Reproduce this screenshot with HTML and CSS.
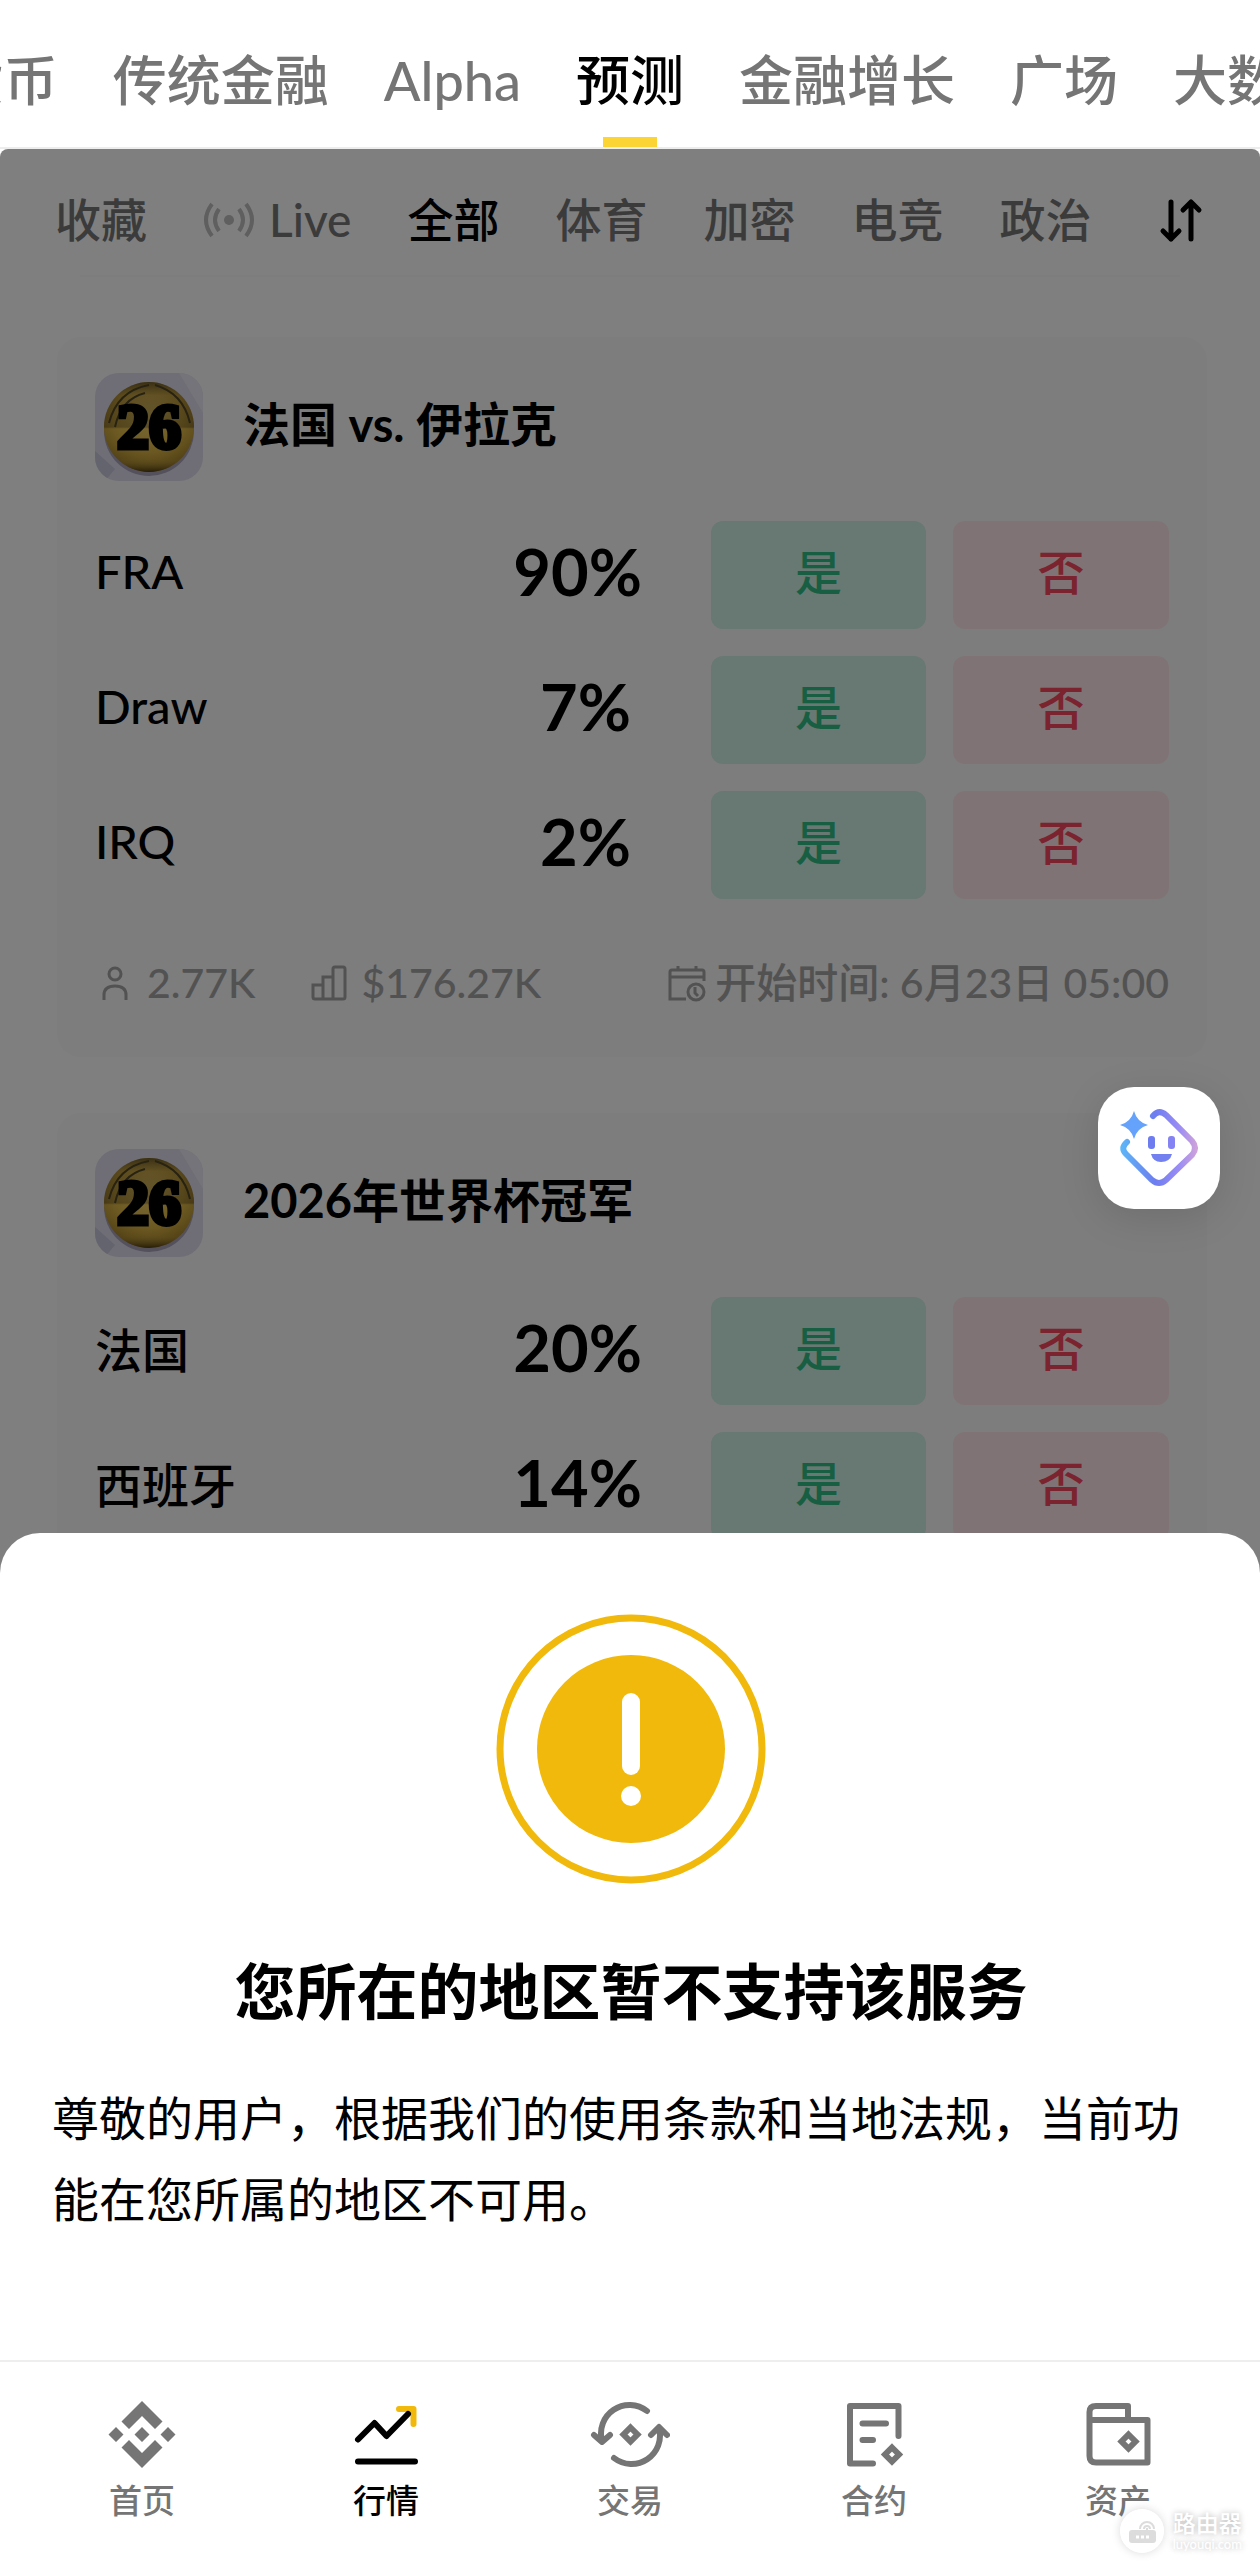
FILE: index.html
```html
<!DOCTYPE html>
<html lang="zh-CN">
<head>
    <meta charset="UTF-8">
    <meta name="viewport" content="width=device-width, initial-scale=1.0">
    <title>预测</title>
    <link rel="stylesheet" href="styles.css">
</head>
<body>

<!-- Shared icons -->
<svg class="sprite" aria-hidden="true">
    <defs>
        <radialGradient id="gold" cx="50%" cy="40%" r="62%">
            <stop offset="0" stop-color="#f2d272"/>
            <stop offset="0.6" stop-color="#cfa83f"/>
            <stop offset="1" stop-color="#8a6a1e"/>
        </radialGradient>
        <linearGradient id="shade" x1="0" y1="0" x2="0" y2="1">
            <stop offset="0" stop-color="#4a4022" stop-opacity="0.7"/>
            <stop offset="0.15" stop-color="#6b5a2a" stop-opacity="0.2"/>
            <stop offset="0.5" stop-color="#6b5a2a" stop-opacity="0.4"/>
            <stop offset="0.52" stop-color="#f4cf55" stop-opacity="0.4"/>
            <stop offset="0.85" stop-color="#f4cf55" stop-opacity="0.2"/>
            <stop offset="1" stop-color="#3a2c08" stop-opacity="0.8"/>
        </linearGradient>
    </defs>
    <symbol id="ball" viewBox="0 0 108 108">
        <rect width="108" height="108" fill="#dedbea"/>
        <path d="M0 78 L20 96 L10 108 H0 Z" fill="#c6c8da"/>
        <path d="M84 0 H108 V40 Z" fill="#ebe8f4"/>
        <ellipse cx="54" cy="58" rx="45" ry="45" fill="#a9a2b8"/>
        <circle cx="54" cy="54" r="45" fill="url(#gold)"/>
        <circle cx="54" cy="54" r="45" fill="url(#shade)"/>
        <path d="M14 50 Q22 18 54 12 M20 54 Q26 26 50 20 M60 12 Q88 20 95 50" fill="none" stroke="#4e4424" stroke-width="2"/>
    </symbol>
    <symbol id="person" viewBox="0 0 40 40">
        <g fill="none" stroke="currentColor" stroke-width="3">
            <circle cx="20" cy="11" r="6"/>
            <path d="M9 37 V32 Q9 23 20 23 Q31 23 31 32 V37"/>
        </g>
    </symbol>
    <symbol id="chart" viewBox="0 0 40 40">
        <path d="M4 22 H14 V36 H6 Q4 36 4 34 Z M14 14 H24 V36 H14 Z M24 6 Q24 4 26 4 H34 Q36 4 36 6 V34 Q36 36 34 36 H24 Z" fill="none" stroke="currentColor" stroke-width="3"/>
    </symbol>
    <symbol id="calendar" viewBox="0 0 40 40">
        <g fill="none" stroke="currentColor" stroke-width="3">
            <path d="M37 18 V9 Q37 7 35 7 H5 Q3 7 3 9 V36 H19 M3 14 H37 M11 3 V8 M29 3 V8"/>
            <circle cx="29" cy="29" r="8"/>
            <path d="M28 24 V30 L31 33"/>
        </g>
    </symbol>
</svg>

<header class="top-tabs">
    <nav class="tabs-before">
        <a href="#">货币</a>
        <a href="#">传统金融</a>
        <a href="#">Alpha</a>
    </nav>
    <a href="#" class="tab-active">预测</a>
    <nav class="tabs-after">
        <a href="#">金融增长</a>
        <a href="#">广场</a>
        <a href="#">大数</a>
    </nav>
</header>

<main class="stage">
    <div class="feed">
        <nav class="sub-tabs">
            <a href="#">收藏</a>
            <a href="#" class="live">
                <svg class="live-icon" viewBox="0 0 52 40" aria-hidden="true">
                    <circle cx="26" cy="20" r="5" fill="currentColor"/>
                    <path d="M16 9 Q8 20 16 31 M36 9 Q44 20 36 31 M9 4 Q-3 20 9 36 M43 4 Q55 20 43 36" fill="none" stroke="currentColor" stroke-width="4"/>
                </svg>
                Live
            </a>
            <a href="#" class="active">全部</a>
            <a href="#">体育</a>
            <a href="#">加密</a>
            <a href="#">电竞</a>
            <a href="#">政治</a>
            <button class="sort" aria-label="排序">
                <svg viewBox="0 0 48 48" fill="none" stroke="currentColor" stroke-width="5" stroke-linecap="round" stroke-linejoin="round">
                    <path d="M14 6 V43 M6 35 L14 43 L22 35 M34 43 V6 M26 14 L34 6 L42 14"/>
                </svg>
            </button>
        </nav>
        <div class="divider"></div>

        <section class="card">
            <div class="card-head">
                <div class="thumb">
                    <svg aria-hidden="true"><use href="#ball"/></svg>
                    <span>26</span>
                </div>
                <h2>法国 vs. 伊拉克</h2>
            </div>
            <ul class="outcomes">
                <li>
                    <span class="name">FRA</span>
                    <span class="odds">90%</span>
                    <button class="yes">是</button>
                    <button class="no">否</button>
                </li>
                <li>
                    <span class="name">Draw</span>
                    <span class="odds odds-short">7%</span>
                    <button class="yes">是</button>
                    <button class="no">否</button>
                </li>
                <li>
                    <span class="name">IRQ</span>
                    <span class="odds odds-short">2%</span>
                    <button class="yes">是</button>
                    <button class="no">否</button>
                </li>
            </ul>
            <div class="meta">
                <span class="meta-item"><svg class="meta-icon"><use href="#person"/></svg>2.77K</span>
                <span class="meta-item"><svg class="meta-icon"><use href="#chart"/></svg>$176.27K</span>
                <span class="meta-item start"><svg class="meta-icon"><use href="#calendar"/></svg>开始时间: 6月23日 05:00</span>
            </div>
        </section>

        <section class="card">
            <div class="card-head">
                <div class="thumb">
                    <svg aria-hidden="true"><use href="#ball"/></svg>
                    <span>26</span>
                </div>
                <h2>2026年世界杯冠军</h2>
            </div>
            <ul class="outcomes">
                <li>
                    <span class="name">法国</span>
                    <span class="odds">20%</span>
                    <button class="yes">是</button>
                    <button class="no">否</button>
                </li>
                <li>
                    <span class="name">西班牙</span>
                    <span class="odds">14%</span>
                    <button class="yes">是</button>
                    <button class="no">否</button>
                </li>
            </ul>
        </section>
    </div>

    <div class="overlay">
        <section class="sheet" role="dialog" aria-labelledby="sheet-title">
            <svg class="warning" viewBox="0 0 270 270" aria-hidden="true">
                <circle cx="135" cy="135" r="131" fill="none" stroke="#f0b90b" stroke-width="7"/>
                <circle cx="135" cy="135" r="94" fill="#f0b90b"/>
                <rect x="126" y="79" width="18" height="82" rx="9" fill="#fff"/>
                <circle cx="135" cy="182" r="10" fill="#fff"/>
            </svg>
            <h1 id="sheet-title">您所在的地区暂不支持该服务</h1>
            <p>尊敬的用户，根据我们的使用条款和当地法规，当前功能在您所属的地区不可用。</p>
        </section>
    </div>

    <button class="assistant" aria-label="AI 助手">
        <svg viewBox="0 0 122 122">
            <defs>
                <linearGradient id="ai" gradientUnits="userSpaceOnUse" x1="22" y1="60" x2="100" y2="60">
                    <stop offset="0" stop-color="#5cb8f8"/>
                    <stop offset="0.45" stop-color="#6d7df0"/>
                    <stop offset="0.75" stop-color="#9a8cf5"/>
                    <stop offset="1" stop-color="#d3a4d8"/>
                </linearGradient>
            </defs>
            <path d="M55 29 Q61 22 68 28 L94 54 Q100 61 94 68 L68 93 Q61 99 54 93 L28 67 Q22 61 29 55" fill="none" stroke="url(#ai)" stroke-width="6" stroke-linecap="round"/>
            <path d="M36 24 Q39 35 50 38 Q39 41 36 52 Q33 41 22 38 Q33 35 36 24 Z" fill="#64a2fb"/>
            <rect x="50" y="49" width="7" height="13" rx="3" fill="#6d7df0"/>
            <rect x="70" y="49" width="7" height="13" rx="3" fill="#8583f3"/>
            <path d="M53 67 H74 Q72 75 63 75 Q55 75 53 67 Z" fill="#7280f0"/>
        </svg>
    </button>
</main>

<nav class="bottom-nav">
    <a href="#">
        <svg viewBox="0 0 80 80" fill="currentColor">
            <path d="M40 7 L60.5 27.5 L53 35 L40 22 L27 35 L19.5 27.5 Z"/>
            <path d="M40 74 L60.5 53.5 L53 46 L40 59 L27 46 L19.5 53.5 Z"/>
            <path d="M40 33 L47.5 40.5 L40 48 L32.5 40.5 Z M14 33 L21.5 40.5 L14 48 L6.5 40.5 Z M66 33 L73.5 40.5 L66 48 L58.5 40.5 Z"/>
        </svg>
        首页
    </a>
    <a href="#" class="active">
        <svg viewBox="0 0 80 80" fill="none" stroke-width="6" stroke-linecap="round" stroke-linejoin="round">
            <path d="M53 15 H67.5 V30" stroke="#f0b90b"/>
            <path d="M58 14 H68 V24 Z" fill="#f0b90b"/>
            <path d="M12 45.5 L28.5 29 L40.5 42 L62 20 M12 67.5 H69" stroke="currentColor"/>
        </svg>
        行情
    </a>
    <a href="#">
        <svg viewBox="0 0 80 80" fill="none" stroke="currentColor" stroke-width="6" stroke-linecap="round" stroke-linejoin="round">
            <path d="M57 17 A28.5 28.5 0 0 0 12 47 M4 41 L12 48 L20 41"/>
            <path d="M24 64 A28.5 28.5 0 0 0 69 34 M61 41 L69 33 L77 41"/>
            <path d="M40.5 33.5 L47.5 40.5 L40.5 47.5 L33.5 40.5 Z" stroke-linejoin="miter"/>
        </svg>
        交易
    </a>
    <a href="#">
        <svg viewBox="0 0 80 80" fill="none" stroke="currentColor" stroke-width="6" stroke-linecap="round" stroke-linejoin="round">
            <path d="M64.5 42 V12 H16 V69.5 H39 M28.5 29.5 H52 M28.5 46 H39"/>
            <path d="M58 53.5 L65 60.5 L58 67.5 L51 60.5 Z" stroke-linejoin="miter"/>
        </svg>
        合约
    </a>
    <a href="#">
        <svg viewBox="0 0 80 80" fill="none" stroke="currentColor" stroke-width="6" stroke-linejoin="round">
            <path d="M11.5 26 V18 Q11.5 12 18 12 H50 V26 M11.5 26 H69.5 V68.5 H18 Q11.5 68.5 11.5 62 Z"/>
            <path d="M50.5 40.5 L57.5 47.5 L50.5 54.5 L43.5 47.5 Z" stroke-linejoin="miter"/>
        </svg>
        资产
    </a>
</nav>

<div class="watermark">
    <svg viewBox="0 0 44 44" aria-hidden="true">
        <circle cx="22" cy="22" r="22" fill="#fff"/>
        <rect x="9" y="21" width="27" height="13" rx="3" fill="#dcdcdc"/>
        <path d="M20 20 A7 7 0 0 1 34 20 M24 20 A3 3 0 0 1 30 20 M27 19 V22" fill="none" stroke="#dcdcdc" stroke-width="2"/>
        <path d="M16 28 H19 M21 28 H24 M26 28 H29" stroke="#fff" stroke-width="3"/>
    </svg>
    <div class="watermark-text">
        <span class="watermark-name">路由器</span>
        <span class="watermark-url">luyouqi.com</span>
    </div>
</div>

</body>
</html>
```
FILE: styles.css
```css
* {
    box-sizing: border-box;
}
body {
    display: flex;
    flex-direction: column;
    height: 100vh;
    margin: 0;
    overflow: hidden;
    position: relative;
    background-color: #fff;
    color: #000;
    font-family: Lato, "Noto Sans CJK SC", sans-serif;
    font-size: 47px;
    font-weight: 500;
}
a {
    color: inherit;
    text-decoration: none;
    white-space: nowrap;
}
button {
    border: none;
    padding: 0;
    background: none;
    color: inherit;
    font: inherit;
    cursor: pointer;
}
svg {
    display: block;
    flex: none;
}
.sprite {
    position: absolute;
    width: 0;
    height: 0;
}

/* Top tabs, the active one stays centred */
.top-tabs {
    display: grid;
    grid-template-columns: minmax(0, 1fr) auto minmax(0, 1fr);
    gap: 55px;
    flex: none;
    border-bottom: 2px solid #ededed;
    overflow: hidden;
    color: #757575;
    font-size: 54px;
    line-height: 66px;
}
.top-tabs a {
    padding: 48px 0 33px;
}
.tabs-before,
.tabs-after {
    display: flex;
    gap: 55px;
}
.tabs-before {
    justify-content: flex-end;
}
.top-tabs .tab-active {
    position: relative;
    color: #000;
}
.tab-active::after {
    content: "";
    position: absolute;
    left: 25%;
    bottom: 0;
    width: 50%;
    height: 10px;
    background-color: #fcd535;
}

/* Feed */
.stage {
    position: relative;
    flex: 1;
    min-height: 0;
    overflow: hidden;
}
.sub-tabs {
    display: flex;
    align-items: center;
    gap: 56px;
    padding: 43px 55px 27px;
    color: #767676;
    font-size: 46px;
    line-height: 56px;
}
.sub-tabs .active {
    color: #000;
}
.live {
    display: flex;
    align-items: center;
    gap: 14px;
}
.live-icon {
    width: 52px;
    height: 40px;
    color: #bebebe;
}
.sort {
    width: 48px;
    height: 48px;
    margin-left: auto;
    color: #000;
}
.divider {
    height: 2px;
    margin: 0 80px;
    background-color: #fafafa;
}
.card {
    margin: 60px 53px 56px 57px;
    padding: 36px 38px 47px;
    border-radius: 24px;
    background-color: #fafafa;
}
.card + .card {
    margin-top: 0;
}
.card-head {
    display: flex;
    align-items: center;
    gap: 40px;
    margin-bottom: 40px;
}
.thumb {
    position: relative;
    width: 108px;
    height: 108px;
    border-radius: 24px;
    overflow: hidden;
}
.thumb svg {
    width: 100%;
    height: 100%;
}
.thumb span {
    position: absolute;
    inset: 0;
    font-family: "Liberation Serif", serif;
    font-size: 64px;
    font-weight: 700;
    line-height: 108px;
    text-align: center;
    -webkit-text-stroke: 5px #000;
}
.card h2 {
    margin: 0;
    padding-bottom: 12px;
    font-size: 47px;
    font-weight: 700;
}
.outcomes {
    display: grid;
    gap: 27px;
    margin: 0;
    padding: 0;
    list-style: none;
}
.outcomes li {
    display: grid;
    grid-template-columns: 1fr auto 215px 216px;
    column-gap: 27px;
    align-items: center;
}
.name,
.odds {
    padding-bottom: 8px;
}
.odds {
    margin-right: 42px;
    font-size: 65px;
    font-weight: 700;
    line-height: 78px;
}
.odds-short {
    margin-right: 53px;
}
.yes,
.no {
    height: 108px;
    padding-bottom: 12px;
    border-radius: 12px;
}
.yes {
    background-color: #d0f0e4;
    color: #2ebd85;
}
.no {
    background-color: #fee6ea;
    color: #f6465d;
}
.meta {
    display: flex;
    gap: 54px;
    margin-top: 57px;
    color: #a4a4a4;
    font-size: 41px;
    line-height: 54px;
}
.meta-item {
    display: flex;
    align-items: center;
    gap: 12px;
    white-space: nowrap;
}
.meta-icon {
    width: 40px;
    height: 40px;
}
.start {
    gap: 8px;
    margin-left: auto;
}

/* Dimmed layer with the bottom sheet */
.overlay {
    position: absolute;
    inset: 0;
    display: flex;
    flex-direction: column;
    justify-content: flex-end;
    border-radius: 8px 8px 0 0;
    background-color: rgba(0, 0, 0, 0.5);
}
.sheet {
    padding: 81px 50px 120px 52px;
    border-radius: 40px 40px 0 0;
    background-color: #fff;
}
.warning {
    width: 270px;
    height: 270px;
    margin: 0 auto;
}
.sheet h1 {
    margin: 66px 0 44px;
    font-size: 61px;
    font-weight: 600;
    line-height: 84px;
    text-align: center;
}
.sheet p {
    margin: 0;
    font-weight: 400;
    line-height: 81px;
}
.assistant {
    position: absolute;
    top: 938px;
    right: 40px;
    width: 122px;
    height: 122px;
    border-radius: 36px;
    background-color: #fff;
    box-shadow: 0 8px 40px rgba(0, 0, 0, 0.12);
}

/* Bottom navigation */
.bottom-nav {
    display: flex;
    flex: none;
    padding: 32px 20px 51px;
    border-top: 2px solid #eee;
    background-color: #fff;
    color: #757575;
    font-size: 33px;
    line-height: 40px;
}
.bottom-nav a {
    display: flex;
    flex: 1;
    flex-direction: column;
    align-items: center;
    gap: 6px;
}
.bottom-nav svg {
    width: 80px;
    height: 80px;
}
.bottom-nav .active {
    color: #000;
}

.watermark {
    position: absolute;
    right: 18px;
    bottom: 18px;
    display: flex;
    align-items: center;
    gap: 9px;
    color: #fff;
}
.watermark svg {
    width: 44px;
    height: 44px;
    border-radius: 50%;
    box-shadow: 0 0 10px rgba(0, 0, 0, 0.15);
}
.watermark-text {
    display: flex;
    flex-direction: column;
    text-shadow: 0 0 6px rgba(0, 0, 0, 0.3);
}
.watermark-name {
    font-size: 23px;
    line-height: 26px;
}
.watermark-url {
    font-size: 13px;
    line-height: 16px;
}
```
